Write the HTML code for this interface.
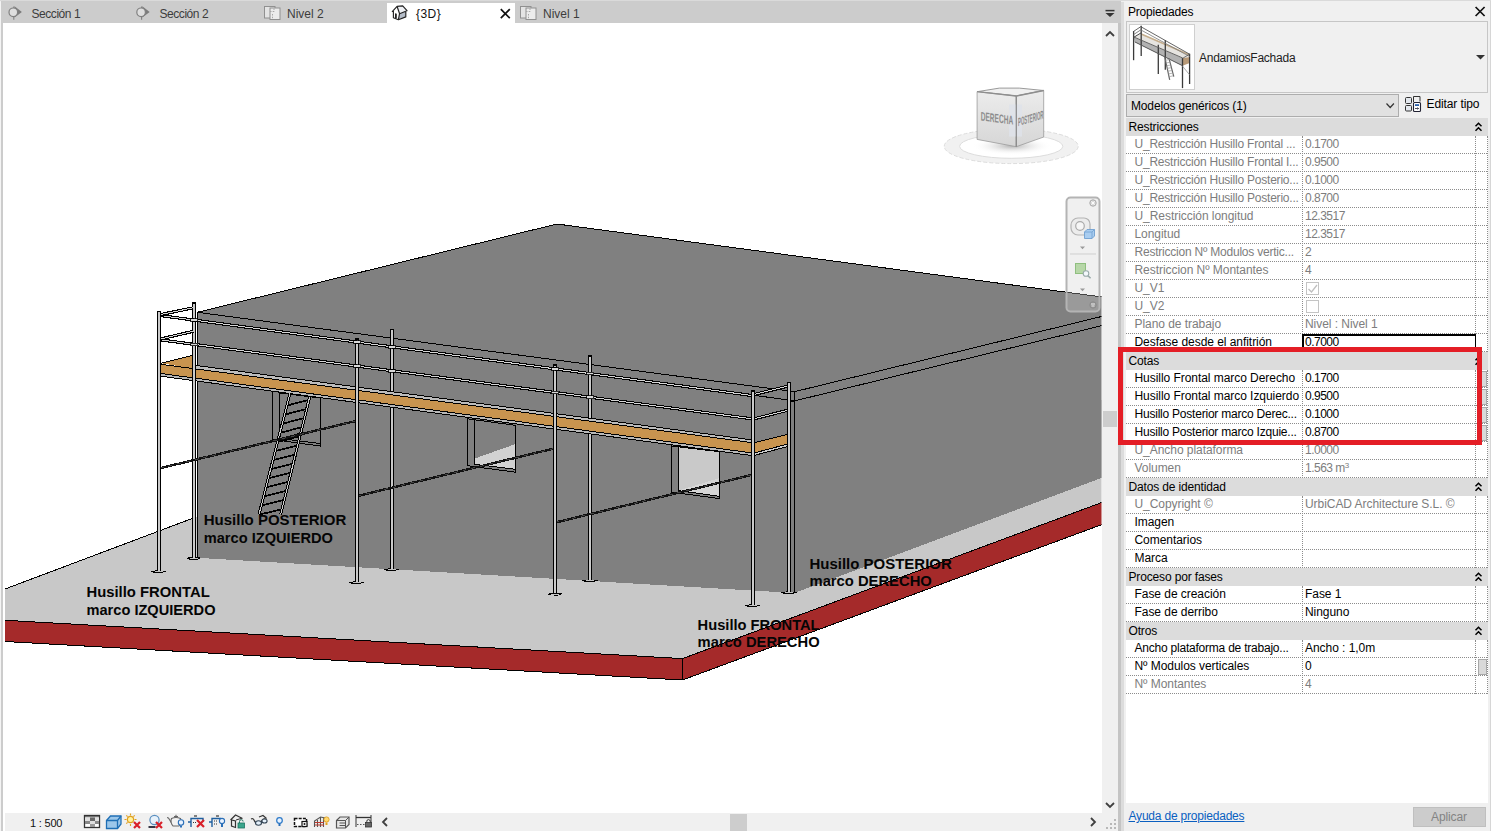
<!DOCTYPE html>
<html lang="es"><head><meta charset="utf-8"><title>Revit - Propiedades</title>
<style>
*{margin:0;padding:0;box-sizing:border-box}
html,body{width:1491px;height:831px;overflow:hidden;background:#f0f0f0}
body{position:relative;font-family:"Liberation Sans",sans-serif;font-size:12px;color:#000}
.abs{position:absolute}
.t{position:absolute;white-space:nowrap;line-height:14px;letter-spacing:-0.05px}
.v{letter-spacing:-0.5px}
.g{color:#7d7d7d}
.hdr{position:absolute;left:1126px;width:362px;height:18px;background:#dcdcdc}
.hl{position:absolute;left:1126px;width:361px;height:0;border-top:1px dotted #8c8c8c}
.vl{position:absolute;width:0;border-left:1px dotted #8c8c8c}
</style></head><body>
<div class="abs" style="left:0;top:0;width:1491px;height:1px;background:#dadada"></div>
<div class="abs" style="left:1px;top:1px;width:1120px;height:22px;background:#cccccc"></div>
<div class="abs" style="left:0;top:2px;width:1px;height:829px;background:#f4f4f4"></div>
<div class="abs" style="left:1px;top:2px;width:2px;height:829px;background:#cccccc"></div>
<div class="abs" style="left:3px;top:23px;width:1099px;height:790px;background:#fff"></div>
<div class="abs" style="left:1102px;top:23px;width:16px;height:790px;background:#f0f0f0"></div>
<div class="abs" style="left:1103px;top:411px;width:14px;height:16px;background:#cdcdcd"></div>
<div class="abs" style="left:5px;top:813px;width:1113px;height:18px;background:#f0f0f0"></div>
<div class="abs" style="left:3px;top:813px;width:2px;height:18px;background:#fff"></div>
<div class="abs" style="left:730px;top:814px;width:17px;height:17px;background:#cdcdcd"></div>
<div class="abs" style="left:1118px;top:23px;width:3px;height:808px;background:#c4c4c4"></div>
<div class="abs" style="left:1121px;top:2px;width:3px;height:829px;background:#dcdcdc"></div>
<div class="abs" style="left:387px;top:2.5px;width:127.6px;height:20.5px;background:#fff"></div>
<div class="t" style="left:31.5px;top:6.5px;color:#3c3c3c;letter-spacing:-0.45px">Sección 1</div>
<div class="t" style="left:159.5px;top:6.5px;color:#3c3c3c;letter-spacing:-0.45px">Sección 2</div>
<div class="t" style="left:287px;top:6.5px;color:#3c3c3c;letter-spacing:0px">Nivel 2</div>
<div class="t" style="left:416px;top:6.5px;color:#111;letter-spacing:0.45px">{3D}</div>
<div class="t" style="left:543px;top:6.5px;color:#3c3c3c;letter-spacing:0px">Nivel 1</div>
<div class="t" style="left:30px;top:816px;font-size:11px;letter-spacing:-0.2px;color:#111">1 : 500</div>
<svg class="abs" style="left:0;top:0" width="1491" height="831" viewBox="0 0 1491 831">
<defs><clipPath id="vc"><rect x="5" y="23" width="1096.5" height="790"/></clipPath></defs>
<g clip-path="url(#vc)" shape-rendering="crispEdges">
<polygon points="0.0,590.9 194.3,517.7 600.0,400.0 1102.0,400.0 1102.0,502.4 682.5,658.6 0.0,620.0" fill="#c8c8c8"/>
<polygon points="0.0,620.0 682.5,658.6 682.5,680.0 0.0,641.2" fill="#a52a2a"/>
<polygon points="682.5,658.6 1102.0,502.4 1102.0,524.5 682.5,680.0" fill="#a52a2a"/>
<path d="M0,590.9 L194.3,517.7 M0,620 L682.5,658.6 L1102,502.4 M0,641.2 L682.5,680 L1102,524.5 M682.5,658.6 V680" stroke="#000" stroke-width="1" fill="none"/>
<polygon points="197.3,312.3 557.0,224.0 1102.0,297.0 1102.0,477.8 794.5,593.0 197.3,557.8" fill="#808080"/>
<path d="M197.3,557.8 V312.3 L557,224 L1102,297 M197.3,312.3 L794.5,391.7 L1102,316.4 M790.9,401.8 L1102,325.6 M794.5,391.7 V593 M755,395.4 L794.5,400.9" stroke="#000" stroke-width="1" fill="none"/>
<path d="M272.6,391 V439.5 L320,446 V398 L279.6,393 M279.6,392 V438.5 L320,443.5" stroke="#000" stroke-width="1" fill="none"/>
<polygon points="474.7,458.5 515.4,444.1 515.4,469.3 474.7,464.3" fill="#d2d2d2"/>
<path d="M467.4,418.8 L515.4,425.3 V472.2 L467.4,465.7 Z M474.7,419.8 V464.3 L515.4,469.3" stroke="#000" stroke-width="1" fill="none"/>
<polygon points="678.3,447.0 719.5,452.0 719.5,496.3 678.3,490.6" fill="#c9c9c9"/>
<polygon points="678.3,490.6 719.5,478.0 719.5,496.3" fill="#d6d6d6"/>
<path d="M671.5,446 L719.5,451.7 V498.6 L671.5,492.2 Z M678.3,447 V490.6 L719.5,496.3" stroke="#000" stroke-width="1" fill="none"/>
<polygon points="383.5,569.4 389,568.2 400.5,569.0 395,571.0 387,570.8" fill="#000"/>
<rect x="388" y="569.1" width="8" height="1" fill="#c4c4c4"/>
<rect x="390" y="329.3" width="4" height="239.3" fill="#000"/>
<rect x="391" y="330.3" width="2" height="238.3" fill="#cacaca"/>
<polygon points="581.5,580.7 587,579.5 598.5,580.3 593,582.3 585,582.1" fill="#000"/>
<rect x="586" y="580.4" width="8" height="1" fill="#c4c4c4"/>
<rect x="588" y="355.5" width="4" height="224.4" fill="#000"/>
<rect x="589" y="356.5" width="2" height="223.4" fill="#cacaca"/>
<polygon points="780.5,592.6 786,591.4 797.5,592.2 792,594.2 784,594.0" fill="#000"/>
<rect x="785" y="592.3" width="8" height="1" fill="#c4c4c4"/>
<rect x="787" y="382.1" width="4" height="209.7" fill="#000"/>
<rect x="788" y="383.1" width="2" height="208.7" fill="#cacaca"/>
<polygon points="161.4,363.2 193.3,355.1 195.7,365.4 195.7,369.0" fill="#c8944f"/>
<path d="M161.4,363.2 L193.3,355.1" stroke="#000" stroke-width="1"/>
<polygon points="195.7,365.4 751.0,439.8 751.0,442.5 195.7,368.9" fill="#bdbdbd"/>
<polygon points="160.8,364.3 751.2,442.5 751.2,452.8 160.8,373.5" fill="#c8944f"/>
<polygon points="160.8,373.5 751.2,452.8 751.2,455.5 160.8,376.2" fill="#b8b8b8"/>
<path d="M195.7,365.4 L751,439.8 M160.8,364.3 L751.2,442.5 M160.8,373.5 L751.2,452.8 M160.8,376.2 L751.2,455.5" stroke="#000" stroke-width="1" fill="none"/>
<polygon points="754.7,442.5 787.2,434.4 787.2,444.2 754.7,452.8" fill="#c8944f"/>
<polygon points="754.7,452.8 787.2,444.2 787.2,446.6 754.7,455.3" fill="#cfcfcf"/>
<path d="M754.7,442.5 L787.2,434.4 M754.7,452.8 L787.2,444.2 M754.7,455.3 L787.2,446.6" stroke="#000" stroke-width="1" fill="none"/>
<polygon points="185.5,558.1 191,556.9 202.5,557.7 197,559.7 189,559.5" fill="#000"/>
<rect x="190" y="557.8" width="8" height="1" fill="#c4c4c4"/>
<rect x="192" y="302.4" width="4" height="255.1" fill="#000"/>
<rect x="193" y="303.4" width="2" height="254.1" fill="#cacaca"/>
<path d="M290.0,393.5 L259.0,514.5" stroke="#000" stroke-width="3.0" fill="none"/>
<path d="M290.0,393.5 L259.0,514.5" stroke="#cacaca" stroke-width="1" fill="none"/>
<path d="M309.6,397.1 L280.7,514.5" stroke="#000" stroke-width="3.0" fill="none"/>
<path d="M309.6,397.1 L280.7,514.5" stroke="#cacaca" stroke-width="1" fill="none"/>
<path d="M288.0,405.3 L307.9,400.1" stroke="#000" stroke-width="1.7"/>
<path d="M285.6,414.4 L305.6,409.2" stroke="#000" stroke-width="1.7"/>
<path d="M283.3,423.5 L303.4,418.3" stroke="#000" stroke-width="1.7"/>
<path d="M281.0,432.6 L301.1,427.4" stroke="#000" stroke-width="1.7"/>
<path d="M278.7,441.7 L298.9,436.5" stroke="#000" stroke-width="1.7"/>
<path d="M276.3,450.8 L296.7,445.6" stroke="#000" stroke-width="1.7"/>
<path d="M274.0,459.9 L294.4,454.7" stroke="#000" stroke-width="1.7"/>
<path d="M271.7,469.0 L292.2,463.8" stroke="#000" stroke-width="1.7"/>
<path d="M269.3,478.1 L289.9,472.9" stroke="#000" stroke-width="1.7"/>
<path d="M267.0,487.2 L287.7,482.0" stroke="#000" stroke-width="1.7"/>
<path d="M264.7,496.3 L285.5,491.1" stroke="#000" stroke-width="1.7"/>
<path d="M262.3,505.4 L283.2,500.2" stroke="#000" stroke-width="1.7"/>
<path d="M260.0,514.5 L281.0,509.3" stroke="#000" stroke-width="1.7"/>
<path d="M282.0,439.0 L299.0,433.5" stroke="#000" stroke-width="1"/>
<path d="M284.5,438.7 L300.2,433.2" stroke="#000" stroke-width="1"/>
<path d="M287.0,438.4 L301.4,432.9" stroke="#000" stroke-width="1"/>
<path d="M289.5,438.1 L302.6,432.6" stroke="#000" stroke-width="1"/>
<path d="M292.0,437.8 L303.8,432.3" stroke="#000" stroke-width="1"/>
<path d="M159.7,468.3 L354.9,421.2" stroke="#111" stroke-width="2.4"/>
<path d="M159.7,468.3 L354.9,421.2" stroke="#6a6a6a" stroke-width="0.6" stroke-dasharray="4,5"/>
<path d="M357.6,496 L552.7,448.8" stroke="#111" stroke-width="2.4"/>
<path d="M357.6,496 L552.7,448.8" stroke="#6a6a6a" stroke-width="0.6" stroke-dasharray="4,5"/>
<path d="M555,522.6 L753,474.6" stroke="#111" stroke-width="2.4"/>
<path d="M555,522.6 L753,474.6" stroke="#6a6a6a" stroke-width="0.6" stroke-dasharray="4,5"/>
<polygon points="150.5,571.4 156,570.2 167.5,571.0 162,573.0 154,572.8" fill="#000"/>
<rect x="155" y="571.1" width="8" height="1" fill="#c4c4c4"/>
<rect x="157" y="311.2" width="4" height="259.4" fill="#000"/>
<rect x="158" y="312.2" width="2" height="258.4" fill="#cacaca"/>
<polygon points="348.5,582.4 354,581.2 365.5,582.0 360,584.0 352,583.8" fill="#000"/>
<rect x="353" y="582.1" width="8" height="1" fill="#c4c4c4"/>
<rect x="355" y="338.4" width="4" height="243.2" fill="#000"/>
<rect x="356" y="339.4" width="2" height="242.2" fill="#cacaca"/>
<polygon points="546.5,594.0 552,592.8 563.5,593.6 558,595.6 550,595.4" fill="#000"/>
<rect x="551" y="593.7" width="8" height="1" fill="#c4c4c4"/>
<rect x="553" y="364.4" width="4" height="228.8" fill="#000"/>
<rect x="554" y="365.4" width="2" height="227.8" fill="#cacaca"/>
<polygon points="744.5,605.4 750,604.2 761.5,605.0 756,607.0 748,606.8" fill="#000"/>
<rect x="749" y="605.1" width="8" height="1" fill="#c4c4c4"/>
<rect x="751" y="390.6" width="4" height="214.0" fill="#000"/>
<rect x="752" y="391.6" width="2" height="213.0" fill="#cacaca"/>
<path d="M160.8,315.6 L751.2,395.4" stroke="#000" stroke-width="3.2" fill="none"/>
<path d="M160.8,315.6 L751.2,395.4" stroke="#d6d6d6" stroke-width="1" fill="none"/>
<path d="M160.8,339.9 L751.2,418.7" stroke="#000" stroke-width="3.2" fill="none"/>
<path d="M160.8,339.9 L751.2,418.7" stroke="#d6d6d6" stroke-width="1" fill="none"/>
<path d="M160.8,314.5 L193.3,307.8" stroke="#000" stroke-width="3.2" fill="none"/>
<path d="M160.8,314.5 L193.3,307.8" stroke="#d6d6d6" stroke-width="1" fill="none"/>
<path d="M160.8,338.9 L193.3,331.3" stroke="#000" stroke-width="3.2" fill="none"/>
<path d="M160.8,338.9 L193.3,331.3" stroke="#d6d6d6" stroke-width="1" fill="none"/>
<path d="M754.7,394.4 L787.4,386.2" stroke="#000" stroke-width="3.2" fill="none"/>
<path d="M754.7,394.4 L787.4,386.2" stroke="#d6d6d6" stroke-width="1" fill="none"/>
<path d="M754.7,418.7 L787.4,410.3" stroke="#000" stroke-width="3.2" fill="none"/>
<path d="M754.7,418.7 L787.4,410.3" stroke="#d6d6d6" stroke-width="1" fill="none"/>
<rect x="190.5" y="318.8" width="7" height="2.6" fill="#d8d8d8" stroke="#000" stroke-width="0.8"/>
<rect x="190.5" y="343.0" width="7" height="2.6" fill="#d8d8d8" stroke="#000" stroke-width="0.8"/>
<rect x="353.5" y="340.8" width="7" height="2.6" fill="#d8d8d8" stroke="#000" stroke-width="0.8"/>
<rect x="353.5" y="364.8" width="7" height="2.6" fill="#d8d8d8" stroke="#000" stroke-width="0.8"/>
<rect x="388.5" y="345.5" width="7" height="2.6" fill="#d8d8d8" stroke="#000" stroke-width="0.8"/>
<rect x="388.5" y="369.5" width="7" height="2.6" fill="#d8d8d8" stroke="#000" stroke-width="0.8"/>
<rect x="551.5" y="367.6" width="7" height="2.6" fill="#d8d8d8" stroke="#000" stroke-width="0.8"/>
<rect x="551.5" y="391.2" width="7" height="2.6" fill="#d8d8d8" stroke="#000" stroke-width="0.8"/>
<rect x="586.5" y="372.3" width="7" height="2.6" fill="#d8d8d8" stroke="#000" stroke-width="0.8"/>
<rect x="586.5" y="395.9" width="7" height="2.6" fill="#d8d8d8" stroke="#000" stroke-width="0.8"/>
<rect x="157.1" y="310.7" width="3.8" height="1.6" fill="#000"/>
<rect x="355.1" y="337.9" width="3.8" height="1.6" fill="#000"/>
<rect x="553.1" y="363.9" width="3.8" height="1.6" fill="#000"/>
<rect x="751.1" y="390.1" width="3.8" height="1.6" fill="#000"/>
<rect x="192.1" y="301.9" width="3.8" height="1.6" fill="#000"/>
<rect x="390.1" y="328.8" width="3.8" height="1.6" fill="#000"/>
<rect x="588.1" y="355.0" width="3.8" height="1.6" fill="#000"/>
<rect x="787.1" y="381.6" width="3.8" height="1.6" fill="#000"/>
<text x="203.7" y="524.9" font-family="Liberation Sans, sans-serif" font-weight="bold" font-size="15" fill="#050505" textLength="142.6" lengthAdjust="spacingAndGlyphs" style="shape-rendering:auto">Husillo POSTERIOR</text>
<text x="203.7" y="542.8" font-family="Liberation Sans, sans-serif" font-weight="bold" font-size="15" fill="#050505" textLength="129.2" lengthAdjust="spacingAndGlyphs" style="shape-rendering:auto">marco IZQUIERDO</text>
<text x="86.5" y="596.8" font-family="Liberation Sans, sans-serif" font-weight="bold" font-size="15" fill="#050505" textLength="123.2" lengthAdjust="spacingAndGlyphs" style="shape-rendering:auto">Husillo FRONTAL</text>
<text x="86.5" y="614.5" font-family="Liberation Sans, sans-serif" font-weight="bold" font-size="15" fill="#050505" textLength="129" lengthAdjust="spacingAndGlyphs" style="shape-rendering:auto">marco IZQUIERDO</text>
<text x="697.6" y="629.7" font-family="Liberation Sans, sans-serif" font-weight="bold" font-size="15" fill="#050505" textLength="122" lengthAdjust="spacingAndGlyphs" style="shape-rendering:auto">Husillo FRONTAL</text>
<text x="697.6" y="647.3" font-family="Liberation Sans, sans-serif" font-weight="bold" font-size="15" fill="#050505" textLength="122" lengthAdjust="spacingAndGlyphs" style="shape-rendering:auto">marco DERECHO</text>
<text x="809.5" y="568.7" font-family="Liberation Sans, sans-serif" font-weight="bold" font-size="15" fill="#050505" textLength="142.3" lengthAdjust="spacingAndGlyphs" style="shape-rendering:auto">Husillo POSTERIOR</text>
<text x="809.5" y="586.3" font-family="Liberation Sans, sans-serif" font-weight="bold" font-size="15" fill="#050505" textLength="122.3" lengthAdjust="spacingAndGlyphs" style="shape-rendering:auto">marco DERECHO</text>
</g>
<g clip-path="url(#vc)">
<defs><radialGradient id="sh"><stop offset="0" stop-color="#9a9a9a" stop-opacity="0.75"/><stop offset="1" stop-color="#ffffff" stop-opacity="0"/></radialGradient><linearGradient id="cf" x1="0" y1="0" x2="0" y2="1"><stop offset="0" stop-color="#ececec"/><stop offset="1" stop-color="#d6d6d6"/></linearGradient></defs>
<ellipse cx="1011.2" cy="146.3" rx="67" ry="17.3" fill="#f1f1f1" stroke="#dcdcdc" stroke-width="1" stroke-dasharray="4,2"/>
<ellipse cx="1011.2" cy="146.3" rx="51.6" ry="12" fill="#ffffff" stroke="#dcdcdc" stroke-width="1"/>
<ellipse cx="1012" cy="146" rx="40" ry="9" fill="url(#sh)"/>
<polygon points="977.1,91.7 999.4,88.1 1019.3,88.1 1043.7,90.5 1016.3,96" fill="#f0f0f0" stroke="#9a9a9a" stroke-width="1"/>
<polygon points="977.1,91.7 1016.3,96 1016.3,146.7 977.1,139.4" fill="url(#cf)" stroke="#9a9a9a" stroke-width="0.8"/>
<polygon points="1016.3,96 1043.7,90.5 1043.7,137 1016.3,146.7" fill="url(#cf)" stroke="#9a9a9a" stroke-width="0.8"/>
<rect x="1009" y="104.5" width="13" height="32" fill="#dfe2ea" opacity="0.8"/>
<path d="M1016.3,96 V146.7" stroke="#8a8a8a" stroke-width="1.2"/><path d="M977.1,91.7 L1016.3,96 L1043.7,90.5" stroke="#8e8e8e" stroke-width="1.3" fill="none"/>
<text transform="matrix(1,0.13,0,1,980.7,120.5)" font-family="Liberation Sans, sans-serif" font-weight="bold" font-size="12.4" fill="#8c8c8c" textLength="32.5" lengthAdjust="spacingAndGlyphs">DERECHA</text>
<text transform="matrix(1,-0.3,0,1,1018,126.2)" font-family="Liberation Sans, sans-serif" font-weight="bold" font-size="11.8" fill="#8c8c8c" textLength="25.5" lengthAdjust="spacingAndGlyphs">POSTERIOR</text>
<rect x="1066.5" y="197.5" width="33" height="114" rx="4" fill="rgba(207,207,207,0.32)" stroke="#b4b4b4" stroke-width="2"/>
<circle cx="1093" cy="203" r="3.2" fill="#ddd" stroke="#a8a8a8" stroke-width="1"/><path d="M1091.5,201.5 l3,3 m0,-3 l-3,3" stroke="#fff" stroke-width="0.9"/>
<circle cx="1093" cy="305" r="3.2" fill="#9c9c9c" stroke="#8a8a8a" stroke-width="1"/><path d="M1091,304 h4 M1091.5,306 h3" stroke="#eee" stroke-width="0.9"/>
<path d="M1078,218 h6 a6,6 0 0 1 6,6 v6 a5,5 0 0 1 -5,5 h-7 a7,7 0 0 1 -7,-7 v-3 a7,7 0 0 1 7,-7 z" fill="#ececec" stroke="#b4b4b4" stroke-width="1.2"/><circle cx="1080" cy="226" r="4.3" fill="#f6f6f6" stroke="#ababab" stroke-width="1.2"/>
<path d="M1084.5,232 l2.5,-2.5 h7.5 v6.5 l-2.5,2.5 h-7.5 z" fill="#a9cdf0" stroke="#6f9fd0" stroke-width="0.9"/><path d="M1084.5,232 h7.5 l2.5,-2.5 M1092,232 v6.5" fill="none" stroke="#6f9fd0" stroke-width="0.8"/>
<path d="M1080,246.5 h5 l-2.5,2.8 z" fill="#9a9a9a"/><path d="M1070,254 h26" stroke="#cfcfcf" stroke-width="1"/>
<rect x="1075.5" y="263.5" width="10" height="10" fill="#b7d7a8" stroke="#8fbf7f" stroke-width="1"/><circle cx="1086" cy="273.5" r="2.8" fill="#f4f8fc" stroke="#9aa" stroke-width="1.1"/><path d="M1088,275.7 l2.6,2.6" stroke="#9aa" stroke-width="1.6"/>
<path d="M1080,288.5 h5 l-2.5,2.8 z" fill="#9a9a9a"/>
</g>
<path d="M14.5,6.2 L21.9,11.9 L14.5,17.5 Z" fill="#7c7c7c"/><circle cx="13.3" cy="12.3" r="4.3" fill="#dedede" stroke="#808080" stroke-width="1.2"/><path d="M13.8,17 v2.8 M13.8,8 v-1.4" stroke="#808080" stroke-width="1.1"/>
<path d="M142.29999999999998,6.2 L149.7,11.9 L142.29999999999998,17.5 Z" fill="#7c7c7c"/><circle cx="141.1" cy="12.3" r="4.3" fill="#dedede" stroke="#808080" stroke-width="1.2"/><path d="M141.6,17 v2.8 M141.6,8 v-1.4" stroke="#808080" stroke-width="1.1"/>
<rect x="264.5" y="6.5" width="10.5" height="11.5" fill="#e4e4e4" stroke="#909090" stroke-width="1"/><rect x="270.0" y="8" width="10" height="11.5" fill="#ececec" stroke="#909090" stroke-width="1"/><path d="M270.0,11.5 h4.5 M274.0,8.5 v3 M272.5,14 v5" stroke="#a8a8a8" stroke-width="1" stroke-dasharray="1.5,1.2" fill="none"/>
<rect x="520.5" y="6.5" width="10.5" height="11.5" fill="#e4e4e4" stroke="#909090" stroke-width="1"/><rect x="526.0" y="8" width="10" height="11.5" fill="#ececec" stroke="#909090" stroke-width="1"/><path d="M526.0,11.5 h4.5 M530.0,8.5 v3 M528.5,14 v5" stroke="#a8a8a8" stroke-width="1" stroke-dasharray="1.5,1.2" fill="none"/>
<polygon points="393.2,12.1 397.3,7 399.6,13.7 398.4,19.6 393.5,17.7" fill="#fff"/><polygon points="399.6,13.7 406,11.3 405.7,16.9 398.4,19.6" fill="#b4bcc8"/><polygon points="397.1,6.5 402.7,6 406.9,10.7 399.6,13.7" fill="#eef0f4"/><path d="M392,11.9 L397.1,6.4 L402.7,5.9 L407,10.7 L399.6,13.8 L397.2,6.8 M393.4,11 V17.7 L398.4,19.7 L405.8,16.9 V11.3 M399.5,13.8 L398.4,19.6" fill="none" stroke="#222" stroke-width="1.15" stroke-linejoin="round"/><polygon points="395,13.2 396.8,13.8 396.8,18.6 395,17.9" fill="#222"/>
<path d="M500.8,9.2 l9,9 M509.8,9.2 l-9,9" stroke="#111" stroke-width="1.7" fill="none"/>
<path d="M1105.5,10.6 h9" stroke="#333" stroke-width="1.5"/><path d="M1105.5,13 h9 l-4.5,4 z" fill="#333"/>
<path d="M1106,36 l4,-4 l4,4" fill="none" stroke="#404040" stroke-width="1.8"/>
<path d="M1106,803 l4,4 l4,-4" fill="none" stroke="#404040" stroke-width="1.8"/>
<path d="M387,818 l-4,4 l4,4" fill="none" stroke="#404040" stroke-width="1.8"/>
<path d="M1091,818 l4,4 l-4,4" fill="none" stroke="#404040" stroke-width="1.8"/>
<rect x="1114" y="819" width="2" height="2" fill="#b8b8b8"/>
<rect x="1114" y="823" width="2" height="2" fill="#b8b8b8"/>
<rect x="1114" y="827" width="2" height="2" fill="#b8b8b8"/>
<rect x="1110" y="823" width="2" height="2" fill="#b8b8b8"/>
<rect x="1110" y="827" width="2" height="2" fill="#b8b8b8"/>
<rect x="1106" y="827" width="2" height="2" fill="#b8b8b8"/>
<rect x="84.5" y="815.5" width="15" height="12" fill="#fff" stroke="#333" stroke-width="1.3"/><path d="M85,816.8 h14" stroke="#444" stroke-width="1"/><rect x="85" y="817.5" width="5" height="3.5" fill="#e0e0e0"/><rect x="90" y="817.5" width="5" height="3.5" fill="#666"/><rect x="95" y="817.5" width="4" height="3.5" fill="#e0e0e0"/><rect x="85" y="821" width="5" height="3" fill="#888"/><rect x="90" y="821" width="5" height="3" fill="#ddd"/><rect x="95" y="821" width="4" height="3" fill="#888"/><rect x="90" y="824" width="5" height="3" fill="#999"/>
<path d="M106.5,820.5 l4,-4.5 h10.5 v8 l-3.5,4.5 h-11 z" fill="#9cc7ea" stroke="#1f6fb5" stroke-width="1.3"/><path d="M106.5,820.5 h11 l3.5,-4.5 M117.5,820.5 v8" fill="none" stroke="#1f6fb5" stroke-width="1.3"/>
<circle cx="130.5" cy="819.5" r="3.1" fill="#fff3a0" stroke="#e0a020" stroke-width="1.2"/><path d="M130.5,813.5 v2 M130.5,824 v2 M124.5,819.5 h2 M134.5,819.5 h2 M126.3,815.3 l1.3,1.3 M134.7,815.3 l-1.3,1.3 M126.3,823.7 l1.3,-1.3" stroke="#e0a020" stroke-width="1.1"/><path d="M134,822 l6,6 M140,822 l-6,6" stroke="#d8202a" stroke-width="2.2"/>
<circle cx="154.5" cy="820" r="4.6" fill="#e8f2fb" stroke="#5a8fc0" stroke-width="1.2"/><path d="M148.5,827 h7" stroke="#223" stroke-width="1.8"/><path d="M156,822 l6,6 M162,822 l-6,6" stroke="#d8202a" stroke-width="2.2"/>
<path d="M167,817.5 q1.5,0 2.5,2 l2,3.5" fill="none" stroke="#666" stroke-width="1.2"/><path d="M171.5,818.5 q4.5,-2 9,0 q1.5,4 -1.5,7.5 h-6 q-3,-3.5 -1.5,-7.5 z" fill="#f2f2f2" stroke="#666" stroke-width="1.1"/><path d="M174,816.5 h4 M176,814.8 v1.5" stroke="#666" stroke-width="1.1"/><circle cx="181" cy="822.5" r="2.7" fill="#eaf3ff" stroke="#2a6fb8" stroke-width="1.1"/><path d="M180,825.5 h2 v2 h-2z" fill="#2a6fb8"/>
<path d="M188,822 h3 M191,827 v-8.5 h12 v3" fill="none" stroke="#1f5f9f" stroke-width="1.4"/><path d="M194,816 h3" stroke="#333" stroke-width="1.2"/><path d="M193,822.5 h4" stroke="#333" stroke-width="1" stroke-dasharray="1,1"/><path d="M197,820 l7,7 M204,820 l-7,7" stroke="#d8202a" stroke-width="2.2"/>
<path d="M209,822 h3 M212,827 v-8.5 h9" fill="none" stroke="#1f5f9f" stroke-width="1.4"/><path d="M216,816 h3" stroke="#333" stroke-width="1.2"/><path d="M214,821 h4 M214,824 h4" stroke="#333" stroke-width="1" stroke-dasharray="1,1"/><circle cx="222" cy="821" r="2.6" fill="#eaf3ff" stroke="#2a6fb8" stroke-width="1.1"/><path d="M221,824 h2 v3 h-2z" fill="#2a6fb8"/>
<path d="M230.5,820 l5,-5 l7,3.5 M231.5,820 v6 l4,1.5 v-6.5 z" fill="#eee" stroke="#333" stroke-width="1.2"/><path d="M236,820 l6,-1.8" stroke="#333" stroke-width="1"/><rect x="238" y="823" width="6.5" height="5" fill="#3aa58c" stroke="#1d7360" stroke-width="0.8"/><path d="M239.5,823 v-1.5 a1.8,1.8 0 0 1 3.6,0" fill="none" stroke="#1d7360" stroke-width="1"/>
<path d="M251,819 q2,-1 3,1 q1,3 4,3.5 q3,0 4,-3 q1.5,-2.5 4.5,-1 " fill="none" stroke="#333" stroke-width="1.2"/><ellipse cx="258.5" cy="823" rx="3" ry="2.2" fill="#e4f0fa" stroke="#345" stroke-width="1.1"/><ellipse cx="264.5" cy="821" rx="2.6" ry="2" fill="#e4f0fa" stroke="#345" stroke-width="1.1"/><path d="M259,817 l4,-1.5 l3.5,3" fill="none" stroke="#333" stroke-width="1.1"/>
<circle cx="279.5" cy="820.5" r="2.8" fill="#e6f2ff" stroke="#2a78c8" stroke-width="1.2"/><path d="M278.5,823.5 h2 v2.5 h-2z" fill="#2a6fb8"/>
<path d="M294.5,818.5 h12 v8 h-12 z" fill="#fff" stroke="#111" stroke-width="1.5" stroke-dasharray="3,1.2"/><rect x="302" y="821.5" width="5" height="5" fill="#fff" stroke="#111" stroke-width="1.2"/><circle cx="304.5" cy="824" r="1" fill="#111"/>
<path d="M314.5,827 v-6 l6,-4 l5,1 M317.5,827 v-7 M320.5,827 v-9.5 M323.5,827 v-9" fill="none" stroke="#555" stroke-width="1.1"/><path d="M315,822.5 h9 M315,825 h9" stroke="#c0392b" stroke-width="1"/><circle cx="326.5" cy="819.5" r="2.6" fill="#ffd870" stroke="#e0a020" stroke-width="0.9"/><path d="M325.5,822.5 h2 v2.5 h-2z" fill="#e0a020"/>
<path d="M336.5,820.5 l3.5,-3.5 h9 v7.5 l-3.5,3.5 h-9 z" fill="#e6e6e6" stroke="#555" stroke-width="1.2"/><path d="M336.5,820.5 h9 l3.5,-3.5 M345.5,820.5 v7.5 M339.5,823 h6 M339.5,825.5 h6" fill="none" stroke="#555" stroke-width="1"/>
<path d="M356,815 v12 M371,815 v8" stroke="#333" stroke-width="1"/><path d="M356,817.5 h15" stroke="#333" stroke-width="1.3"/><path d="M357,824.5 h8" stroke="#555" stroke-width="1" stroke-dasharray="1.5,1.5"/><rect x="365.5" y="822.5" width="6" height="4.5" fill="#666" stroke="#333" stroke-width="0.8"/><path d="M366.8,822.5 v-1.2 a1.7,1.7 0 0 1 3.4,0 v1.2" fill="none" stroke="#333" stroke-width="1"/>
</svg>
<div class="t" style="left:1128px;top:5px;letter-spacing:-0.2px">Propiedades</div>
<div class="abs" style="left:1126px;top:21px;width:362px;height:72px;border:1px solid #c6c6c6;background:#f0f0f0"></div>
<div class="abs" style="left:1129px;top:24px;width:66px;height:66px;border:1px solid #cfcfcf;background:#fff"></div>
<div class="t" style="left:1199px;top:51px;letter-spacing:-0.25px;color:#222">AndamiosFachada</div>
<div class="abs" style="left:1126px;top:94px;width:273px;height:23px;border:1px solid #adadad;background:#e1e1e1"></div>
<div class="t" style="left:1131px;top:99px;letter-spacing:-0.15px">Modelos genéricos (1)</div>
<div class="t" style="left:1426.5px;top:97px;letter-spacing:-0.1px">Editar tipo</div>
<div class="abs" style="left:1126px;top:118px;width:362px;height:685px;background:#fff"></div>
<div class="hdr" style="top:118px"></div>
<div class="t" style="left:1128.5px;top:120px;letter-spacing:-0.15px">Restricciones</div>
<div class="t g" style="left:1134.5px;top:137px;letter-spacing:-0.22px">U_Restricción Husillo Frontal ...</div>
<div class="t g v" style="left:1305px;top:137px">0.1700</div>
<div class="hl" style="top:153px"></div>
<div class="t g" style="left:1134.5px;top:155px;letter-spacing:-0.22px">U_Restricción Husillo Frontal I...</div>
<div class="t g v" style="left:1305px;top:155px">0.9500</div>
<div class="hl" style="top:171px"></div>
<div class="t g" style="left:1134.5px;top:173px;letter-spacing:-0.22px">U_Restricción Husillo Posterio...</div>
<div class="t g v" style="left:1305px;top:173px">0.1000</div>
<div class="hl" style="top:189px"></div>
<div class="t g" style="left:1134.5px;top:191px;letter-spacing:-0.22px">U_Restricción Husillo Posterio...</div>
<div class="t g v" style="left:1305px;top:191px">0.8700</div>
<div class="hl" style="top:207px"></div>
<div class="t g" style="left:1134.5px;top:209px">U_Restricción longitud</div>
<div class="t g v" style="left:1305px;top:209px">12.3517</div>
<div class="hl" style="top:225px"></div>
<div class="t g" style="left:1134.5px;top:227px">Longitud</div>
<div class="t g v" style="left:1305px;top:227px">12.3517</div>
<div class="hl" style="top:243px"></div>
<div class="t g" style="left:1134.5px;top:245px;letter-spacing:-0.22px">Restriccion Nº Modulos vertic...</div>
<div class="t g v" style="left:1305px;top:245px">2</div>
<div class="hl" style="top:261px"></div>
<div class="t g" style="left:1134.5px;top:263px">Restriccion Nº Montantes</div>
<div class="t g v" style="left:1305px;top:263px">4</div>
<div class="hl" style="top:279px"></div>
<div class="t g" style="left:1134.5px;top:281px">U_V1</div>
<div class="hl" style="top:297px"></div>
<div class="t g" style="left:1134.5px;top:299px">U_V2</div>
<div class="hl" style="top:315px"></div>
<div class="t g" style="left:1134.5px;top:317px">Plano de trabajo</div>
<div class="t g" style="left:1305px;top:317px">Nivel : Nivel 1</div>
<div class="hl" style="top:333px"></div>
<div class="t " style="left:1134.5px;top:335px">Desfase desde el anfitrión</div>
<div class="t  v" style="left:1305px;top:335px">0.7000</div>
<div class="hl" style="top:351px"></div>
<div class="hdr" style="top:352px"></div>
<div class="t" style="left:1128.5px;top:354px;letter-spacing:-0.15px">Cotas</div>
<div class="t " style="left:1134.5px;top:371px">Husillo Frontal marco Derecho</div>
<div class="t  v" style="left:1305px;top:371px">0.1700</div>
<div class="hl" style="top:387px"></div>
<div class="t " style="left:1134.5px;top:389px">Husillo Frontal marco Izquierdo</div>
<div class="t  v" style="left:1305px;top:389px">0.9500</div>
<div class="hl" style="top:405px"></div>
<div class="t " style="left:1134.5px;top:407px;letter-spacing:-0.22px">Husillo Posterior marco Derec...</div>
<div class="t  v" style="left:1305px;top:407px">0.1000</div>
<div class="hl" style="top:423px"></div>
<div class="t " style="left:1134.5px;top:425px;letter-spacing:-0.22px">Husillo Posterior marco Izquie...</div>
<div class="t  v" style="left:1305px;top:425px">0.8700</div>
<div class="hl" style="top:441px"></div>
<div class="t g" style="left:1134.5px;top:443px">U_Ancho plataforma</div>
<div class="t g v" style="left:1305px;top:443px">1.0000</div>
<div class="hl" style="top:459px"></div>
<div class="t g" style="left:1134.5px;top:461px">Volumen</div>
<div class="t g v" style="left:1305px;top:461px">1.563 m<span style="font-size:8px;position:relative;top:-4px">3</span></div>
<div class="hl" style="top:477px"></div>
<div class="hdr" style="top:478px"></div>
<div class="t" style="left:1128.5px;top:480px;letter-spacing:-0.15px">Datos de identidad</div>
<div class="t g" style="left:1134.5px;top:497px">U_Copyright ©</div>
<div class="t g" style="left:1305px;top:497px">UrbiCAD Architecture S.L. ©</div>
<div class="hl" style="top:513px"></div>
<div class="t " style="left:1134.5px;top:515px">Imagen</div>
<div class="hl" style="top:531px"></div>
<div class="t " style="left:1134.5px;top:533px">Comentarios</div>
<div class="hl" style="top:549px"></div>
<div class="t " style="left:1134.5px;top:551px">Marca</div>
<div class="hl" style="top:567px"></div>
<div class="hdr" style="top:568px"></div>
<div class="t" style="left:1128.5px;top:570px;letter-spacing:-0.15px">Proceso por fases</div>
<div class="t " style="left:1134.5px;top:587px">Fase de creación</div>
<div class="t " style="left:1305px;top:587px">Fase 1</div>
<div class="hl" style="top:603px"></div>
<div class="t " style="left:1134.5px;top:605px">Fase de derribo</div>
<div class="t " style="left:1305px;top:605px">Ninguno</div>
<div class="hl" style="top:621px"></div>
<div class="hdr" style="top:622px"></div>
<div class="t" style="left:1128.5px;top:624px;letter-spacing:-0.15px">Otros</div>
<div class="t " style="left:1134.5px;top:641px;letter-spacing:-0.22px">Ancho plataforma de trabajo...</div>
<div class="t " style="left:1305px;top:641px">Ancho : 1,0m</div>
<div class="hl" style="top:657px"></div>
<div class="t " style="left:1134.5px;top:659px">Nº Modulos verticales</div>
<div class="t  v" style="left:1305px;top:659px">0</div>
<div class="hl" style="top:675px"></div>
<div class="t g" style="left:1134.5px;top:677px">Nº Montantes</div>
<div class="t g v" style="left:1305px;top:677px">4</div>
<div class="hl" style="top:693px"></div>
<div class="vl" style="left:1302px;top:136px;height:216px"></div>
<div class="vl" style="left:1475px;top:136px;height:216px"></div>
<div class="vl" style="left:1487px;top:136px;height:216px"></div>
<div class="vl" style="left:1302px;top:370px;height:108px"></div>
<div class="vl" style="left:1475px;top:370px;height:108px"></div>
<div class="vl" style="left:1487px;top:370px;height:108px"></div>
<div class="vl" style="left:1302px;top:496px;height:72px"></div>
<div class="vl" style="left:1475px;top:496px;height:72px"></div>
<div class="vl" style="left:1487px;top:496px;height:72px"></div>
<div class="vl" style="left:1302px;top:586px;height:36px"></div>
<div class="vl" style="left:1475px;top:586px;height:36px"></div>
<div class="vl" style="left:1487px;top:586px;height:36px"></div>
<div class="vl" style="left:1302px;top:640px;height:54px"></div>
<div class="vl" style="left:1475px;top:640px;height:54px"></div>
<div class="vl" style="left:1487px;top:640px;height:54px"></div>
<div class="abs" style="left:1302px;top:334px;width:174px;height:18px;border:1px solid #000;border-width:2px 1px 0 2px"></div>
<div class="abs" style="left:1478px;top:371px;width:9px;height:16px;background:#d9d9d9;border:1px solid #a8a8a8"></div>
<div class="abs" style="left:1478px;top:389px;width:9px;height:16px;background:#d9d9d9;border:1px solid #a8a8a8"></div>
<div class="abs" style="left:1478px;top:407px;width:9px;height:16px;background:#d9d9d9;border:1px solid #a8a8a8"></div>
<div class="abs" style="left:1478px;top:425px;width:9px;height:16px;background:#d9d9d9;border:1px solid #a8a8a8"></div>
<div class="abs" style="left:1478px;top:659px;width:9px;height:16px;background:#d9d9d9;border:1px solid #a8a8a8"></div>
<div class="abs" style="left:1124px;top:803px;width:367px;height:28px;background:#f0f0f0"></div>
<div class="t" style="left:1128.5px;top:809px;color:#0a5fc0;text-decoration:underline;letter-spacing:-0.2px">Ayuda de propiedades</div>
<div class="abs" style="left:1413px;top:807px;width:73px;height:20px;background:#cccccc;border:1px solid #bfbfbf"></div>
<div class="t" style="left:1431px;top:810px;color:#838383;letter-spacing:-0.1px">Aplicar</div>
<div class="abs" style="left:1490px;top:1px;width:1px;height:830px;background:#d6d6d6"></div>
<svg class="abs" style="left:0;top:0;pointer-events:none" width="1491" height="831" viewBox="0 0 1491 831">
<path d="M1475.5,126.2 l3,-3 l3,3 M1475.5,130.7 l3,-3 l3,3" fill="none" stroke="#000" stroke-width="1.5"/>
<rect x="1306.5" y="282.5" width="12" height="12" fill="#fff" stroke="#c4c4c4"/><path d="M1308.5,289 l3,3 l5.5,-7" fill="none" stroke="#c0c0c0" stroke-width="1.3"/>
<rect x="1306.5" y="300.5" width="12" height="12" fill="#fff" stroke="#c4c4c4"/>
<path d="M1475.5,360.2 l3,-3 l3,3 M1475.5,364.7 l3,-3 l3,3" fill="none" stroke="#000" stroke-width="1.5"/>
<path d="M1475.5,486.2 l3,-3 l3,3 M1475.5,490.7 l3,-3 l3,3" fill="none" stroke="#000" stroke-width="1.5"/>
<path d="M1475.5,576.2 l3,-3 l3,3 M1475.5,580.7 l3,-3 l3,3" fill="none" stroke="#000" stroke-width="1.5"/>
<path d="M1475.5,630.2 l3,-3 l3,3 M1475.5,634.7 l3,-3 l3,3" fill="none" stroke="#000" stroke-width="1.5"/>
<path d="M1475.6,7 l9,9 M1484.6,7 l-9,9" stroke="#111" stroke-width="1.7" fill="none"/>
<path d="M1476,55 h9 l-4.5,4.5 z" fill="#333"/>
<path d="M1386.5,103.5 l3.7,4 l3.7,-4" fill="none" stroke="#333" stroke-width="1.2"/>
<rect x="1405.5" y="97.5" width="6" height="6" rx="1" fill="#e4e8ee" stroke="#333" stroke-width="1"/><rect x="1405.5" y="105.5" width="6" height="5.5" rx="1" fill="#e4e8ee" stroke="#333" stroke-width="1"/><path d="M1413.5,102 v-5.5 h6.5 v5" fill="none" stroke="#333" stroke-width="1"/><rect x="1413.5" y="102.5" width="7" height="9" rx="1" fill="#fff" stroke="#223" stroke-width="1.1"/><rect x="1415" y="104.2" width="4" height="1.8" fill="#2a5fa8"/><path d="M1415,108.5 h3.5 m-1,-1 l1,1 l-1,1" fill="none" stroke="#223" stroke-width="0.8"/>
<polygon points="1133.6,36.9 1182.5,57.9 1182.5,65.7 1134.8,41.9" fill="#b2b2b2"/>
<polygon points="1140.9,33.7 1189.8,54.6 1189.8,57.5 1182.5,58.2 1133.6,36.9" fill="#e6e4e0"/>
<path d="M1141.2,33.9 L1189.8,54.9" stroke="#c4ad8c" stroke-width="1.6" fill="none"/>
<polygon points="1182.5,58.2 1189.8,57.0 1189.8,63.0 1182.5,65.7" fill="#b89a78"/>
<path d="M1133.6,31.0 L1133.6,60.2" stroke="#3a3a3a" stroke-width="1.3" fill="none"/>
<path d="M1141.2,25.7 L1141.2,56.1" stroke="#3a3a3a" stroke-width="1.3" fill="none"/>
<path d="M1158.3,44.7 L1158.3,73.9" stroke="#3a3a3a" stroke-width="1.3" fill="none"/>
<path d="M1165.3,40.1 L1165.3,69.8" stroke="#3a3a3a" stroke-width="1.3" fill="none"/>
<path d="M1182.5,57.9 L1182.5,88.1" stroke="#3a3a3a" stroke-width="1.3" fill="none"/>
<path d="M1189.6,53.8 L1189.6,84.0" stroke="#3a3a3a" stroke-width="1.3" fill="none"/>
<path d="M1141.2,26.9 L1189.8,54.3" stroke="#555" stroke-width="0.9" fill="none"/>
<path d="M1141.2,30.1 L1189.8,56.6" stroke="#777" stroke-width="0.8" fill="none"/>
<path d="M1133.6,31.4 L1141.2,26.4" stroke="#555" stroke-width="0.9" fill="none"/>
<path d="M1133.6,34.6 L1141.2,29.6" stroke="#666" stroke-width="0.8" fill="none"/>
<path d="M1133.6,37.4 L1141.2,32.8" stroke="#444" stroke-width="1" fill="none"/>
<path d="M1133.6,36.9 L1182.5,57.9" stroke="#555" stroke-width="0.9" fill="none"/>
<path d="M1134.8,41.9 L1182.5,65.7" stroke="#555" stroke-width="1.0" fill="none"/>
<path d="M1182.5,66.2 L1189.6,74.8" stroke="#888" stroke-width="0.7" fill="none"/>
<path d="M1182.5,58.4 L1189.8,54.0" stroke="#555" stroke-width="0.8" fill="none"/>
<path d="M1164.7,56.6 L1169.7,79.9" stroke="#666" stroke-width="1.2" fill="none"/>
<path d="M1169.0,58.4 L1173.8,76.7" stroke="#666" stroke-width="1.2" fill="none"/>
<path d="M1165.6,60.2 L1169.7,59.5" stroke="#999" stroke-width="0.7" fill="none"/>
<path d="M1166.1,63.0 L1170.3,62.2" stroke="#999" stroke-width="0.7" fill="none"/>
<path d="M1166.7,65.7 L1170.8,65.0" stroke="#999" stroke-width="0.7" fill="none"/>
<path d="M1167.2,68.4 L1171.3,67.7" stroke="#999" stroke-width="0.7" fill="none"/>
<path d="M1167.8,71.2 L1171.9,70.5" stroke="#999" stroke-width="0.7" fill="none"/>
<path d="M1168.3,73.9 L1172.4,73.2" stroke="#999" stroke-width="0.7" fill="none"/>
<path d="M1168.9,76.7 L1173.0,75.9" stroke="#999" stroke-width="0.7" fill="none"/>
</svg>
<div class="abs" style="left:1118px;top:346.5px;width:363.5px;height:98px;border:5px solid #e41e26"></div>
</body></html>
